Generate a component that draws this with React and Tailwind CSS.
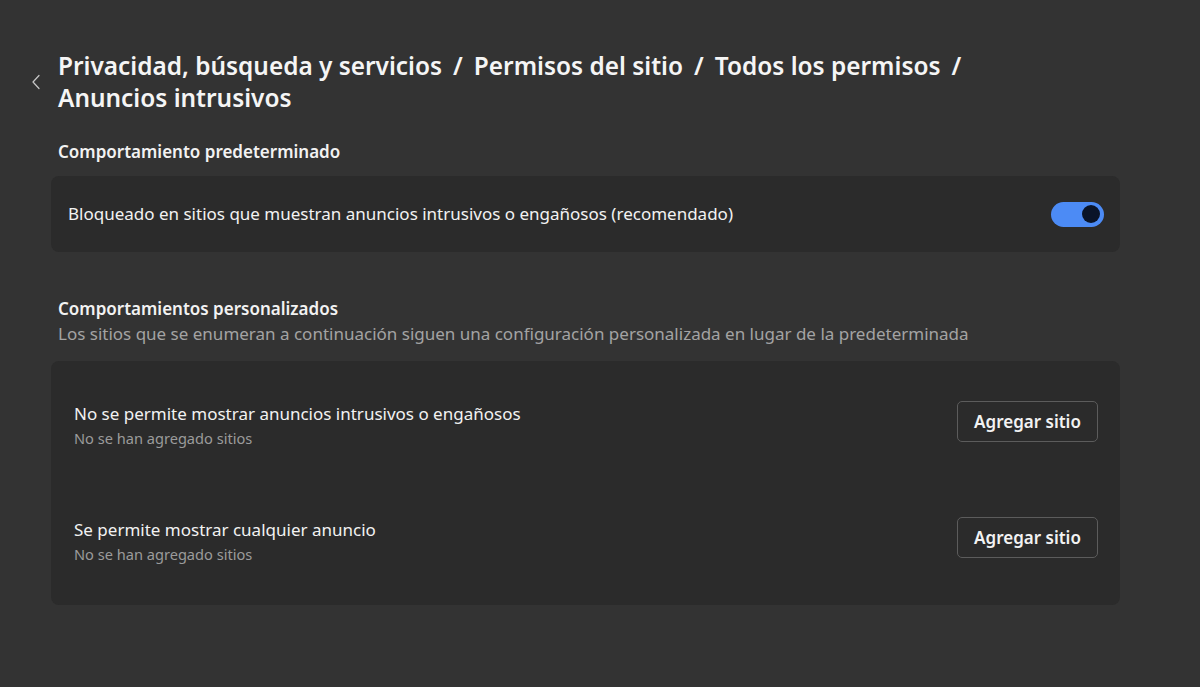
const FONT = { fontFamily: '"Noto Sans", "Open Sans", Arial, sans-serif' };

function Chevron() {
  return (
    <svg width="10" height="16" viewBox="0 0 10 16" fill="none" className="shrink-0">
      <path d="M8 1.5L2 8l6 6.5" stroke="#c8c8c8" strokeWidth="1.2" strokeLinecap="round" strokeLinejoin="round" />
    </svg>
  );
}

function Toggle() {
  return (
    <div className="w-[53px] h-[25px] rounded-full bg-[#4c8bf5] flex items-center justify-end pr-[4px]">
      <div className="w-[18px] h-[18px] rounded-full bg-[#0a1428]" />
    </div>
  );
}

function Sep() {
  return <span className="inline-block px-[11px]">/</span>;
}

function SiteRow({ title }) {
  return (
    <div className="flex items-start justify-between h-[41px]">
      <div className="mt-[2px]">
        <div className="text-[17px] leading-[22px] text-[#f2f2f2]">{title}</div>
        <div className="text-[14.6px] leading-[18px] text-[#9b9b9b] mt-[4px]">No se han agregado sitios</div>
      </div>
      <button className="w-[141px] h-[41px] rounded-[5px] border border-[#5c5c5c] bg-[#2b2b2b] text-[17px] font-semibold text-[#f2f2f2]">
        Agregar sitio
      </button>
    </div>
  );
}

export default function App() {
  return (
    <div className="w-[1200px] h-[687px] bg-[#333333] overflow-hidden" style={FONT}>
      <div className="pt-[50px]">
        {/* Breadcrumb */}
        <div className="flex items-center pl-[31px]">
          <Chevron />
          <h1 className="ml-[17px] text-[24.4px] leading-[32px] font-semibold text-[#f5f5f5]">
            <div className="whitespace-nowrap">
              Privacidad, búsqueda y servicios<Sep />Permisos del sitio<Sep />Todos los permisos<Sep />
            </div>
            <div>Anuncios intrusivos</div>
          </h1>
        </div>

        <div className="ml-[51px] w-[1069px]">
          <h2 className="mt-[26px] pl-[7px] text-[17px] leading-[23px] font-semibold text-[#f2f2f2]">
            Comportamiento predeterminado
          </h2>
          <div className="mt-[13px] h-[76px] rounded-[8px] bg-[#2b2b2b] flex items-center justify-between pl-[17px] pr-[16px]">
            <span className="text-[17px] text-[#f2f2f2]">
              Bloqueado en sitios que muestran anuncios intrusivos o engañosos (recomendado)
            </span>
            <Toggle />
          </div>

          <h2 className="mt-[45px] pl-[7px] text-[17px] leading-[23px] font-semibold text-[#f2f2f2]">
            Comportamientos personalizados
          </h2>
          <p className="pl-[7px] mt-[3px] text-[17px] leading-[22px] text-[#a3a3a3]">
            Los sitios que se enumeran a continuación siguen una configuración personalizada en lugar de la predeterminada
          </p>
          <div className="mt-[16px] h-[244px] rounded-[8px] bg-[#2b2b2b] pt-[40px] pl-[23px] pr-[22px] flex flex-col gap-[75px]">
            <SiteRow title="No se permite mostrar anuncios intrusivos o engañosos" />
            <SiteRow title="Se permite mostrar cualquier anuncio" />
          </div>
        </div>
      </div>
    </div>
  );
}
